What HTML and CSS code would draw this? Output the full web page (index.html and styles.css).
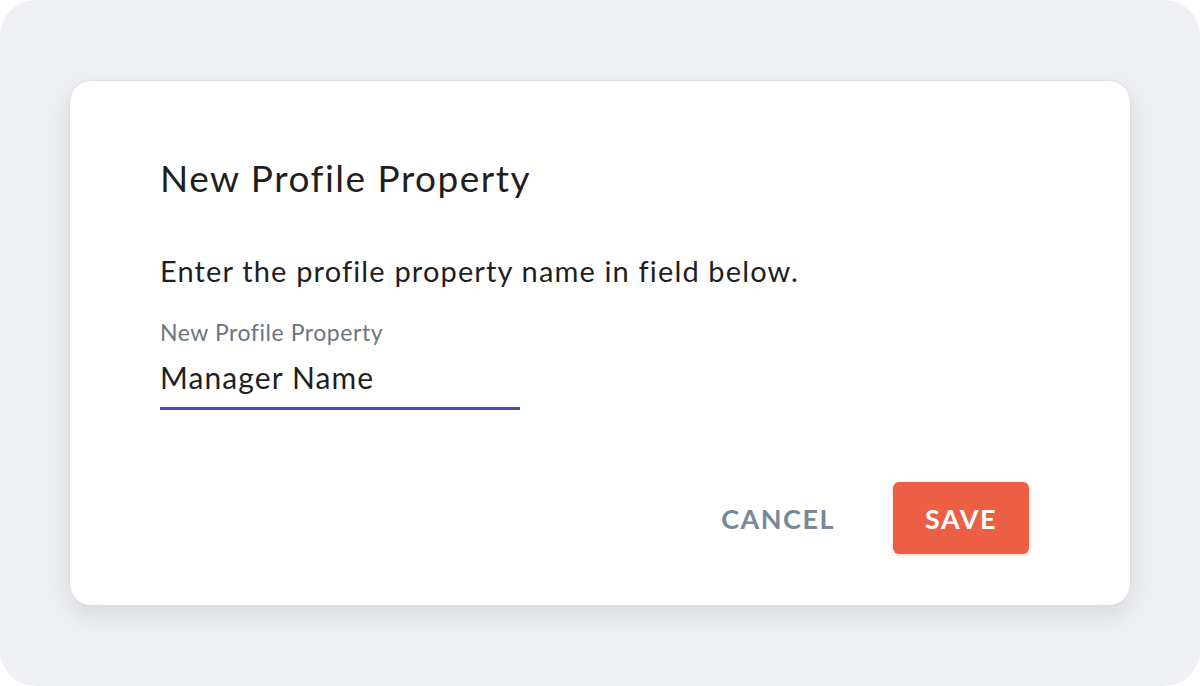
FILE: index.html
```html
<html>
<head>
    <title>New Profile Property</title>
    <link rel="stylesheet" href="styles.css">
</head>
<body>
    <div class="frame">
        <form class="dialog" id="propertyForm">
            <h1 class="dialog-title">New Profile Property</h1>
            <p class="dialog-text">Enter the profile property name in field below.</p>
            <label class="field">
                <span class="field-label">New Profile Property</span>
                <input class="field-input" type="text" value="Manager Name">
            </label>
            <div class="actions">
                <button type="button" class="btn-cancel">CANCEL</button>
                <button type="submit" class="btn-save">SAVE</button>
            </div>
        </form>
    </div>
</body>
</html>
```

FILE: styles.css
```css
html, body{
    margin: 0;
    background-color: #ffffff;
}
body{
    font-family: Lato, "Open Sans", sans-serif;
}
.frame{
    width: 1200px;
    height: 686px;
    box-sizing: border-box;
    padding: 80px 69px;
    background-color: #eff0f3;
    border-radius: 36px;
}
.dialog{
    box-sizing: border-box;
    height: 526px;
    margin: 0;
    padding: 75px 101px 0 90px;
    background-color: #ffffff;
    border: 1px solid #d9dde2;
    border-radius: 22px;
    box-shadow: 0 10px 22px rgba(90, 100, 120, 0.16);
}
.dialog-title{
    margin: 0;
    font-size: 37px;
    line-height: 44px;
    font-weight: 400;
    letter-spacing: 1.5px;
    color: #1f1f1f;
}
.dialog-text{
    margin: 53px 0 0;
    font-size: 29px;
    line-height: 36px;
    letter-spacing: 1.15px;
    color: #1f1f1f;
}
.field{
    display: flex;
    flex-direction: column;
    width: 360px;
    margin-top: 29px;
}
.field-label{
    font-size: 23px;
    line-height: 28px;
    letter-spacing: 0.55px;
    color: #6b7580;
}
.field-input{
    margin-top: 12px;
    padding: 0 0 11px;
    font-family: inherit;
    font-size: 30px;
    line-height: 38px;
    letter-spacing: 1.1px;
    height: 52px;
    box-sizing: border-box;
    color: #1f1f1f;
    border: none;
    border-bottom: 3px solid #4152a6;
    outline: none;
    background: transparent;
}
.actions{
    display: flex;
    justify-content: flex-end;
    align-items: center;
    gap: 58px;
    margin-top: 72px;
}
.btn-cancel{
    padding: 0;
    font-family: inherit;
    font-size: 27px;
    font-weight: 700;
    letter-spacing: 1.5px;
    color: #76889a;
    background: none;
    border: none;
    cursor: pointer;
}
.btn-save{
    width: 136px;
    height: 72px;
    font-family: inherit;
    font-size: 27px;
    font-weight: 700;
    letter-spacing: 1.5px;
    color: #ffffff;
    background-color: #ec5f44;
    border: none;
    border-radius: 6px;
    box-shadow: 0 1px 4px rgba(236, 95, 68, 0.3);
    cursor: pointer;
}
```
